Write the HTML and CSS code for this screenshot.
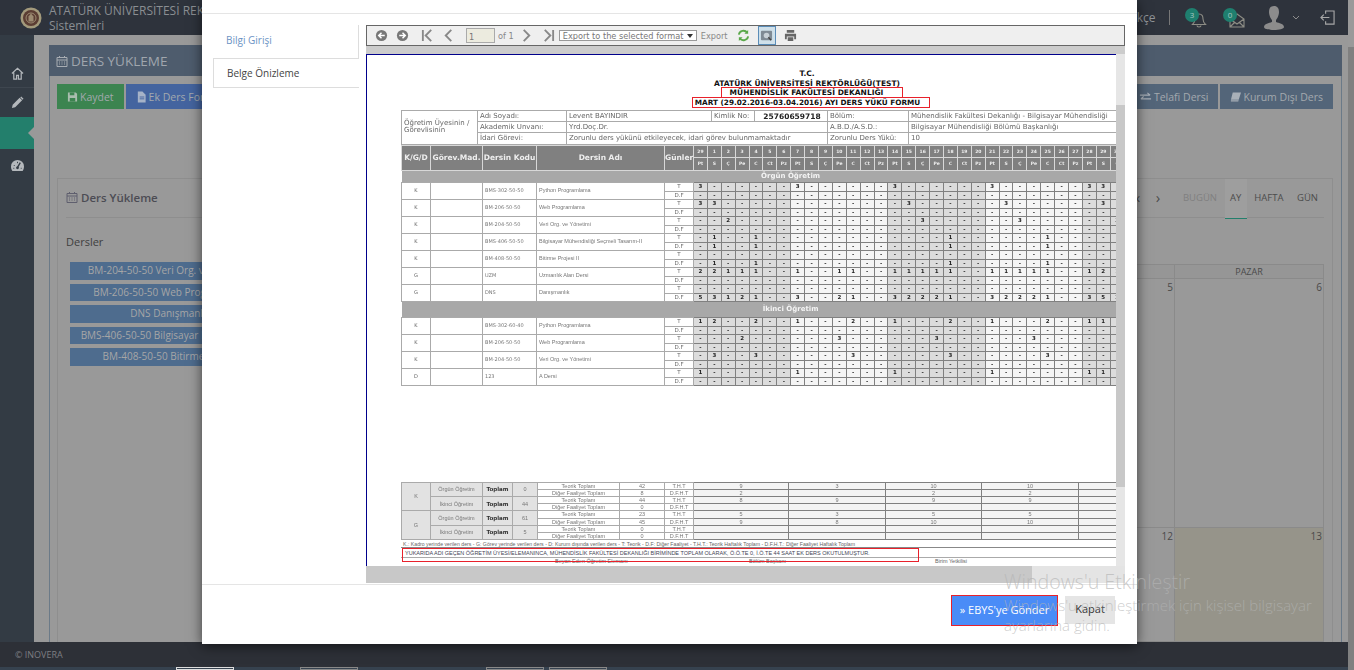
FILE: index.html
```html
<!DOCTYPE html>
<html lang="tr">
<head>
<meta charset="utf-8">
<title>Ders Yükleme</title>
<link rel="stylesheet" href="styles.css">
</head>
<body>
<div class="page">
  <div class="main">
    <header class="topbar">
      <div class="brand">
        <svg class="logo" viewBox="0 0 22 22"><circle cx="11" cy="11" r="10.5" fill="#a39a7c"/><circle cx="11" cy="11" r="8" fill="#5b3d33"/><circle cx="11" cy="11" r="5" fill="none" stroke="#9c8b72" stroke-width="1"/><path d="M11 6.5l2.5 3v5h-5v-5z" fill="#9c8b72"/></svg>
        <div class="brand-text">ATATÜRK ÜNİVERSİTESİ REKTÖRLÜĞÜ<br>Sistemleri</div>
      </div>
      <div class="top-tools">
        <span class="lang">Türkçe</span>
        <span class="vline"></span>
        <span class="notif">
          <svg class="ic-notif" viewBox="0 0 18 18"><path d="M9 3c-3 0-4 2-4 5 0 3-1 4-2.500 5.500h13C14 12 13 11 13 8c0-3-1-5-4-5zM7 14.500c0 2 4 2 4 0" fill="none" stroke="#8d8d85" stroke-width="1.100"/></svg>
          <span class="badge">3</span>
        </span>
        <span class="notif notif-mail">
          <svg class="ic-notif" viewBox="0 0 18 18"><path d="M2 8l7-5 7 5v8H2zM2 8l7 5 7-5M2 16l5-5M16 16l-5-5" fill="none" stroke="#8d8d85" stroke-width="1.100"/></svg>
          <span class="badge">0</span>
        </span>
        <svg class="ic-user" viewBox="0 0 20 24"><path d="M10 0c3.500 0 5 2.500 5 6s-2 7-3 8v2c3 1 8 2 8 5 0 2-5 3-10 3S0 23 0 21c0-3 5-4 8-5v-2c-1-1-3-4.500-3-8s1.500-6 5-6z" fill="#8c8c8c"/></svg>
        <svg class="ic-chev" viewBox="0 0 8 5"><path d="M1 1l3 3 3-3" fill="none" stroke="#8c8c8c"/></svg>
        <svg class="ic-logout" viewBox="0 0 16 16"><path d="M6 4V1h9v14H6v-3M10 8H1M4 5L1 8l3 3" fill="none" stroke="#a8a8a8" stroke-width="1.200"/></svg>
      </div>
    </header>

    <div class="shell">
      <nav class="sidebar">
        <div class="side-item side-home">
          <svg viewBox="0 0 14 14"><path d="M1 7l6-5.500L13 7M3 6v7h3V9h2v4h3V6" fill="none" stroke="#b4b8bc" stroke-width="1.300"/></svg>
        </div>
        <div class="side-item">
          <svg viewBox="0 0 14 14"><path d="M1 13l.8-3.500 7.500-7.500 2.700 2.700-7.500 7.500zM10 1.500l1-1 2.500 2.500-1 1z" fill="#b4b8bc"/></svg>
        </div>
        <div class="side-active"></div>
        <div class="side-item side-gauge">
          <svg viewBox="0 0 14 12"><path d="M7 0a7 7 0 0 1 7 7c0 2-.6 3.500-1.500 5h-11C.6 10.500 0 9 0 7a7 7 0 0 1 7-7z" fill="#b4b8bc"/><path d="M7 8l3-5" stroke="#333b44" stroke-width="1.500"/><circle cx="7" cy="8.500" r="1.500" fill="#333b44"/><path d="M3 6h1M2.500 9h1M10.500 9h1M7 2v1.500" stroke="#333b44"/></svg>
        </div>
      </nav>

      <main class="content">
        <section class="panel">
          <div class="panel-head">
            <svg class="ic-cal" viewBox="0 0 12 12"><path d="M1 2.500h10v9H1zM1 5h10M3.500 1v2M8.500 1v2M3 7h1M5.500 7h1M8 7h1M3 9h1M5.500 9h1M8 9h1" fill="none" stroke="#a8adb3"/></svg>
            DERS YÜKLEME
          </div>
          <div class="panel-body">
            <div class="actions">
              <div class="action-group">
                <span class="btn btn-green"><svg class="btn-ic" viewBox="0 0 12 12"><path d="M1 1h8.500L11 2.500V11H1z" fill="#a9bdae"/><path d="M3 1h5v3H3zM3 7h6v4H3z" fill="#3c8450"/></svg>Kaydet</span>
                <span class="btn btn-blue"><svg class="btn-ic" viewBox="0 0 12 12"><path d="M2 0h5l3.500 3.500V12H2z" fill="#a6b3c8"/><path d="M4 6h5M4 8h5" stroke="#44649f"/></svg>Ek Ders Formu</span>
              </div>
              <div class="action-group">
                <span class="btn btn-slate"><svg class="btn-ic btn-ic-wide" viewBox="0 0 14 12"><path d="M1 4h11M9 1.500L12 4 M13 8H2M5 5.500L2 8" fill="none" stroke="#a9b0b8" stroke-width="1.200"/></svg>Telafi Dersi</span>
                <span class="btn btn-slate"><svg class="btn-ic" viewBox="0 0 12 12"><path d="M3 1h9L9.500 9H1zM1 9.500h8.500L9 11H1z" fill="#a9b0b8"/></svg>Kurum Dışı Ders</span>
              </div>
            </div>

            <div class="card">
              <div class="card-head">
                <div class="card-title">
                  <svg class="ic-cal-sm" viewBox="0 0 12 12"><path d="M1 2.500h10v9H1zM1 5h10M3.500 1v2M8.500 1v2M3 7h1M5.500 7h1M8 7h1M3 9h1M5.500 9h1M8 9h1" fill="none" stroke="#5f5f6e"/></svg>
                  Ders Yükleme
                </div>
                <div class="cal-nav">
                  <span class="cal-arrow">‹</span><span class="cal-arrow">›</span>
                  <span class="cal-tab cal-muted">BUGÜN</span>
                  <span class="cal-tab cal-on">AY</span>
                  <span class="cal-tab">HAFTA</span>
                  <span class="cal-tab">GÜN</span>
                </div>
              </div>
              <div class="card-body">
                <aside class="lessons">
                  <div class="lessons-title">Dersler</div>
                  <div class="lesson">BM-204-50-50 Veri Org. ve Yönetimi</div>
                  <div class="lesson">BM-206-50-50 Web Programlama</div>
                  <div class="lesson">DNS Danışmanlık</div>
                  <div class="lesson">BMS-406-50-50 Bilgisayar Mühendisliği</div>
                  <div class="lesson">BM-408-50-50 Bitirme Projesi</div>
                </aside>
                <div class="calendar">
                  <div class="cal-h">PAZARTESİ</div><div class="cal-h">SALI</div><div class="cal-h">ÇARŞAMBA</div><div class="cal-h">PERŞEMBE</div><div class="cal-h">CUMA</div><div class="cal-h">CUMARTESİ</div><div class="cal-h">PAZAR</div>
                  <div class="cal-d">29</div><div class="cal-d">1</div><div class="cal-d">2</div><div class="cal-d">3</div><div class="cal-d">4</div><div class="cal-d">5</div><div class="cal-d">6</div>
                  <div class="cal-d">7</div><div class="cal-d">8</div><div class="cal-d">9</div><div class="cal-d">10</div><div class="cal-d">11</div><div class="cal-d">12</div><div class="cal-d cal-today">13</div>
                </div>
              </div>
            </div>
          </div>
        </section>
      </main>
    </div>

    <footer class="footer">© INOVERA</footer>
    <div class="strip"><span class="tick tick-w"></span><span class="tick"></span><span class="tick tick-3"></span><span class="tick tick-4"></span></div>
  </div>
  <div class="page-scroll"></div>
</div>

<div class="modal">
  <div class="modal-head"></div>
  <div class="modal-body">
    <ul class="tabs">
      <li class="tab tab-link">Bilgi Girişi</li>
      <li class="tab tab-on">Belge Önizleme</li>
    </ul>
    <div class="viewer">
      <div class="vtoolbar">
        <svg class="vb vb-round" viewBox="0 0 14 14"><circle cx="7" cy="7" r="6" fill="#777"/><path d="M10.500 7h-6M7 4L4 7l3 3" fill="none" stroke="#fff" stroke-width="1.600"/></svg>
        <svg class="vb vb-round" viewBox="0 0 14 14"><circle cx="7" cy="7" r="6" fill="#777"/><path d="M3.500 7h6M7 4l3 3-3 3" fill="none" stroke="#fff" stroke-width="1.600"/></svg>
        <svg class="vb vb-first" viewBox="0 0 14 14"><path d="M2 1v12M11 1L5 7l6 6" fill="none" stroke="#888" stroke-width="2"/></svg>
        <svg class="vb vb-prev" viewBox="0 0 14 14"><path d="M10 1L4 7l6 6" fill="none" stroke="#888" stroke-width="2"/></svg>
        <span class="page-num">1</span>
        <span class="of">of 1</span>
        <svg class="vb vb-next" viewBox="0 0 14 14"><path d="M4 1l6 6-6 6" fill="none" stroke="#888" stroke-width="2"/></svg>
        <svg class="vb vb-last" viewBox="0 0 14 14"><path d="M12 1v12M3 1l6 6-6 6" fill="none" stroke="#888" stroke-width="2"/></svg>
        <span class="vselect">Export to the selected format<i class="caret"></i></span>
        <span class="vexport">Export</span>
        <svg class="vb vb-refresh" viewBox="0 0 14 14"><path d="M2 6a5 5 0 0 1 9-2M12 8a5 5 0 0 1-9 2" fill="none" stroke="#5aa84a" stroke-width="2"/><path d="M12 1v4H8zM2 13V9h4z" fill="#5aa84a"/></svg>
        <span class="vactive"><svg class="vb-in" viewBox="0 0 14 14"><rect x="1" y="2" width="12" height="10" rx="1" fill="#7f8a94"/><circle cx="7" cy="7" r="3" fill="#c8d0d6"/><path d="M9 9l3 3" stroke="#444" stroke-width="1.500"/></svg></span>
        <svg class="vb vb-print" viewBox="0 0 14 14"><path d="M3 1h8v3H3zM1 5h12v6h-2V8H3v3H1zM4 9h6v4H4z" fill="#666"/></svg>
      </div>
      <div class="vgap"></div>
      <div class="vframe">
        <div class="vpage">
          <div class="report">
            <div class="r-title">T.C.</div>
            <div class="r-title">ATATÜRK ÜNİVERSİTESİ REKTÖRLÜĞÜ(TEST)</div>
            <div class="r-title"><span class="red-a">MÜHENDİSLİK FAKÜLTESİ DEKANLIĞI</span></div>
            <div class="r-title r-last"><span class="red-b">MART (29.02.2016-03.04.2016) AYI DERS YÜKÜ FORMU</span></div>

            <table class="info">
              <colgroup><col class="i1"><col class="i2"><col class="i3"><col class="i4"><col class="i5"><col class="i6"><col class="i7"></colgroup>
              <tr><td rowspan="3" class="i-who">Öğretim Üyesinin / Görevlisinin</td><td>Adı Soyadı:</td><td>Levent BAYINDIR</td><td>Kimlik No:</td><td class="i-id">25760659718</td><td>Bölüm:</td><td>Mühendislik Fakültesi Dekanlığı - Bilgisayar Mühendisliği</td></tr>
              <tr><td>Akademik Unvanı:</td><td colspan="3">Yrd.Doç.Dr.</td><td>A.B.D./A.S.D.:</td><td>Bilgisayar Mühendisliği Bölümü Başkanlığı</td></tr>
              <tr><td>İdari Görevi:</td><td colspan="3">Zorunlu ders yükünü etkileyecek, idari görev bulunmamaktadır</td><td>Zorunlu Ders Yükü:</td><td>10</td></tr>
            </table>

            <table class="load" id="load"></table>

            <div class="load-gap"></div>

            <table class="sum">
              <colgroup><col class="s1"><col class="s2"><col class="s3"><col class="s4"><col class="s5"><col class="s6"><col class="s7"><col class="s8"><col class="s8b"><col class="s8c"><col class="s8d"><col class="s9"></colgroup>
              <tr><td rowspan="4" class="s-g">K</td><td rowspan="2" class="s-g">Örgün Öğretim</td><td rowspan="2" class="s-t">Toplam</td><td rowspan="2" class="s-g">0</td><td>Teorik Toplam</td><td>42</td><td>T.H.T</td><td class="s-w">9</td><td class="s-w">3</td><td class="s-w">10</td><td class="s-w">10</td><td class="s-w"></td></tr>
              <tr><td>Diğer Faaliyet Toplam</td><td>8</td><td>D.F.H.T</td><td class="s-w">2</td><td class="s-w"></td><td class="s-w">2</td><td class="s-w">2</td><td class="s-w"></td></tr>
              <tr><td rowspan="2" class="s-g">İkinci Öğretim</td><td rowspan="2" class="s-t">Toplam</td><td rowspan="2" class="s-g">44</td><td>Teorik Toplam</td><td>44</td><td>T.H.T</td><td class="s-w">8</td><td class="s-w">9</td><td class="s-w">9</td><td class="s-w">9</td><td class="s-w"></td></tr>
              <tr><td>Diğer Faaliyet Toplam</td><td>0</td><td>D.F.H.T</td><td class="s-w"></td><td class="s-w"></td><td class="s-w"></td><td class="s-w"></td><td class="s-w"></td></tr>
              <tr><td rowspan="4" class="s-g">G</td><td rowspan="2" class="s-g">Örgün Öğretim</td><td rowspan="2" class="s-t">Toplam</td><td rowspan="2" class="s-g">61</td><td>Teorik Toplam</td><td>23</td><td>T.H.T</td><td class="s-w">5</td><td class="s-w">3</td><td class="s-w">5</td><td class="s-w">5</td><td class="s-w"></td></tr>
              <tr><td>Diğer Faaliyet Toplam</td><td>45</td><td>D.F.H.T</td><td class="s-w">9</td><td class="s-w">8</td><td class="s-w">10</td><td class="s-w">10</td><td class="s-w"></td></tr>
              <tr><td rowspan="2" class="s-g">İkinci Öğretim</td><td rowspan="2" class="s-t">Toplam</td><td rowspan="2" class="s-g">5</td><td>Teorik Toplam</td><td>0</td><td>T.H.T</td><td class="s-w"></td><td class="s-w"></td><td class="s-w"></td><td class="s-w"></td><td class="s-w"></td></tr>
              <tr><td>Diğer Faaliyet Toplam</td><td>0</td><td>D.F.H.T</td><td class="s-w"></td><td class="s-w"></td><td class="s-w"></td><td class="s-w"></td><td class="s-w"></td></tr>
            </table>

            <div class="legend">K.: Kadro yerinde verilen ders - G: Görev yerinde verilen ders - D: Kurum dışında verilen ders - T: Teorik - D.F: Diğer Faaliyet - T.H.T.: Teorik Haftalık Toplam - D.F.H.T.: Diğer Faaliyet Haftalık Toplam</div>
            <div class="statement"><span class="red-c">YUKARIDA ADI GEÇEN ÖĞRETİM ÜYESİ/ELEMANINCA, MÜHENDİSLİK FAKÜLTESİ DEKANLIĞI BİRİMİNDE TOPLAM OLARAK, Ö.Ö.TE 0, İ.Ö.TE 44 SAAT EK DERS OKUTULMUŞTUR.</span></div>
            <div class="signs"><span class="sign-1">Beyan Eden Öğretim Elemanı</span><span class="sign-2">Bölüm Başkanı</span><span class="sign-3">Birim Yetkilisi</span></div>
          </div>
        </div>
        <div class="vscroll"><div class="vscroll-gap"></div><div class="vscroll-thumb"></div></div>
      </div>
      <div class="hscroll"><div class="hscroll-thumb"></div></div>
    </div>
  </div>
  <div class="modal-foot">
    <span class="btn-send">» EBYS'ye Gönder</span>
    <span class="btn-close">Kapat</span>
  </div>
</div>

<div class="watermark">
  <div class="wm-title">Windows'u Etkinleştir</div>
  <div class="wm-text">Windows'u etkinleştirmek için kişisel bilgisayar<br>ayarlarına gidin.</div>
</div>

<script src="app.js"></script>
</body>
</html>
```

FILE: styles.css
```css
* { box-sizing: border-box; }
html, body { margin: 0; padding: 0; height: 670px; overflow: hidden; }
body { font-family: "Open Sans", "Noto Sans", sans-serif; background: #999; position: relative; }

.page { display: flex; width: 1354px; height: 670px; }
.main { width: 1348px; display: flex; flex-direction: column; height: 670px; }
.page-scroll { width: 6px; background: linear-gradient(#9a9a9a 0, #9a9a9a 47px, #808080 47px); }

/* top bar */
.topbar { height: 35px; background: #2e333c; display: flex; justify-content: space-between; align-items: center; padding: 0 13.500px 0 20px; }
.brand { display: flex; align-items: center; gap: 7px; }
.logo { width: 22px; height: 22px; }
.brand-text { font-size: 12px; line-height: 15px; color: #8a8e92; }
.top-tools { display: flex; align-items: center; }
.lang { font-size: 12px; color: #8f9296; margin-right: 13px; }
.vline { width: 1px; height: 15px; background: #777; margin-right: 17px; }
.notif { position: relative; width: 18px; height: 18px; margin-right: 20px; }
.notif-mail { margin-right: 21px; }
.ic-notif { width: 18px; height: 18px; display: block; position: relative; left: 3px; top: 2px; }
.badge { position: absolute; left: -1.500px; top: -1px; width: 14px; height: 14px; border-radius: 50%; background: #1f7f6f; color: #a8c8c2; font-size: 8px; line-height: 14px; text-align: center; }
.ic-user { width: 20px; height: 24px; margin-right: 8px; }
.ic-chev { width: 8px; height: 5px; margin-right: 20px; }
.ic-logout { width: 15px; height: 15px; }

/* shell */
.shell { flex: 1; display: flex; min-height: 0; }
.sidebar { width: 34px; background: #333b44; padding-top: 24px; display: flex; flex-direction: column; flex: none; }
.side-item { height: 29px; display: flex; align-items: center; justify-content: center; }
.side-item svg { width: 13px; height: 13px; }
.side-home { border-bottom: 1px solid #3e464f; }
.side-active { height: 32px; background: #237f6c; position: relative; }
.side-active::after { content: ""; position: absolute; right: 0; top: 10px; border: 6px solid transparent; border-left: 0; border-right-color: #999; }
.side-gauge { height: 32px; }

.content { flex: 1; padding: 10px 6px 0 15px; background: #999; min-width: 0; }
.panel { height: 100%; border-left: 1px solid #6b7a88; border-right: 1px solid #6b7a88; display: flex; flex-direction: column; }
.panel-head { height: 31px; background: #4e5c6d; margin: 0 -1px; color: #a0a6ad; font-size: 13.500px; display: flex; align-items: center; padding-left: 7px; gap: 2px; }
.ic-cal { width: 12px; height: 12px; margin-right: 1px; }
.panel-body { flex: 1; padding: 8px 8px 0 7px; display: flex; flex-direction: column; min-height: 0; }
.actions { display: flex; justify-content: space-between; height: 25px; margin-bottom: 69px; flex: none; }
.action-group { display: flex; gap: 2px; }
.btn { display: flex; align-items: center; height: 25px; padding: 0 10px; font-size: 10.500px; color: #a3a9ae; }
.btn-ic { width: 11px; height: 12px; margin-right: 2px; }
.btn-ic-wide { width: 13px; }
.btn-green { background: #3c8450; }
.btn-blue { background: #44649f; padding-right: 40px; }
.btn-slate { background: #536579; }
.card { flex: 1; border: 1px solid #8e8e8e; border-bottom: 0; padding: 0 8px; display: flex; flex-direction: column; min-height: 0; }
.card-head { height: 39px; border-bottom: 1px solid #8e8e8e; display: flex; justify-content: space-between; align-items: center; flex: none; }
.card-title { font-size: 11.500px; font-weight: 600; color: #4c4c54; display: flex; align-items: center; gap: 3px; position: relative; top: -1px; }
.ic-cal-sm { width: 12px; height: 12px; }
.cal-nav { display: flex; align-items: stretch; height: 39px; font-size: 9.500px; color: #4c4c4c; }
.cal-arrow { width: 20px; font-size: 15px; line-height: 37px; text-align: center; }
.cal-tab { line-height: 38px; padding: 0 6px; margin-left: 1.500px; }
.cal-arrow + .cal-tab { margin-left: 9px; }
.cal-muted { color: #808080; }
.cal-on { padding: 0 5.500px; border-bottom: 1px solid #237f6c; background: #9e9e9e; margin-bottom: -1px; }
.card-body { flex: 1; display: flex; min-height: 0; }
.lessons { width: 214px; padding: 16px 0 0 0; flex: none; }
.lessons-title { font-size: 11px; color: #3f3f3f; margin-bottom: 13px; line-height: 15px; }
.lesson { margin: 0 9px 4px 4px; height: 17.500px; line-height: 17px; background: #4e6c8e; color: #a6a6a6; font-size: 10px; text-align: center; white-space: nowrap; overflow: hidden; }
.calendar { flex: 1; display: grid; grid-template-columns: repeat(7, 1fr); grid-template-rows: 15px 249px 1fr; margin-top: 46px; border-left: 1px solid #8a8a8a; }
.cal-h { border: solid #8a8a8a; border-width: 1px 1px 1px 0; background: #969696; font-size: 9px; line-height: 14px; text-align: center; color: #4a4a4a; }
.cal-d { border: solid #8a8a8a; border-width: 0 1px 1px 0; font-size: 10px; color: #4a4a4a; text-align: right; padding: 1px 1px 0 0; }
.cal-today { background: #96948a; }

.footer { height: 25px; background: #2d3037; color: #7d7e82; font-size: 9px; line-height: 26px; padding-left: 15px; flex: none; }
.strip { height: 3px; background: #36424f; display: flex; padding-left: 176px; flex: none; overflow: hidden; }
.tick { width: 58px; height: 3px; border: 1px solid #888; margin-right: 66px; }
.tick-w { border-color: #ddd; }
.tick-3 { margin-left: 62px; margin-right: 5px; }
.tick-4 { margin: 0; }

/* modal */
.modal { position: absolute; left: 202px; top: 0; width: 935px; height: 644px; background: #fff; box-shadow: 0 2px 12px rgba(0,0,0,.6); display: flex; flex-direction: column; }
.modal-head { height: 14px; border-bottom: 1px solid #e5e5e5; flex: none; }
.modal-body { height: 571px; border-bottom: 1px solid #e5e5e5; display: flex; padding: 11px 12px 0 11px; flex: none; }
.tabs { list-style: none; margin: 0; padding: 0; width: 146px; height: 63px; flex: none; font-size: 10px; }
.tab { height: 33px; line-height: 31px; padding-left: 13px; }
.tab-link { color: #6b93c4; border-right: 1px solid #ddd; }
.tab-on { height: 30px; line-height: 29px; color: #444; border: 1px solid #ddd; border-right: 0; }
.viewer { margin-left: 7px; width: 759px; flex: none; display: flex; flex-direction: column; height: 558px; }
.vtoolbar { height: 21px; background: #efefef; border: 1px solid #666; display: flex; align-items: center; flex: none; padding-left: 8px; font-family: "DejaVu Sans", sans-serif; font-size: 8.200px; color: #888; }
.vb { width: 13px; height: 13px; flex: none; }
.vb-round { margin-right: 8px; }
.vb-first { margin-left: 4px; margin-right: 8px; }
.vb-prev { margin-right: 11px; }
.page-num { width: 29px; height: 15px; border: 1px solid #aaa; background: #ecebdf; padding-left: 2px; line-height: 16px; color: #777; margin-right: 3px; }
.of { margin-right: 6px; }
.vb-next { margin-right: 9px; }
.vb-last { margin-right: 4px; }
.vselect { width: 138px; height: 11px; border: 1px solid #999; background: #fff; color: #777; line-height: 10px; padding-left: 3px; white-space: nowrap; position: relative; margin-right: 4px; overflow: hidden; }
.caret { position: absolute; right: 3px; top: 3px; border: 3px solid transparent; border-top: 4px solid #333; border-bottom: 0; }
.vexport { margin-right: 9px; }
.vb-refresh { margin-right: 8px; }
.vactive { width: 18px; height: 19px; border: 1px solid #5b8db8; background: #cfe0ea; display: flex; align-items: center; justify-content: center; margin-right: 8px; }
.vb-in { width: 13px; height: 13px; }
.vgap { height: 8px; background: #ccc; flex: none; }
.vframe { height: 512px; display: flex; flex: none; }
.vpage { width: 750px; border: solid #00008b; border-width: 1px 0 0 1px; overflow: hidden; background: #fff; flex: none; }
.vscroll { width: 9px; background: #e6e6e6; display: flex; flex-direction: column; }
.vscroll-gap { height: 51px; background: #e6e6e6; }
.vscroll-thumb { height: 382px; background: #c8c8c8; }
.hscroll { height: 17px; background: #e4e4e4; flex: none; }
.hscroll-thumb { width: 666px; height: 17px; background: #c8c8c8; }

/* report */
.report { width: 812px; margin-left: 34px; padding-top: 14px; font-family: "DejaVu Sans", sans-serif; color: #555; }
.r-title { text-align: center; font-size: 7.500px; font-weight: 700; color: #111; height: 10px; line-height: 9px; }
.r-last { height: 11px; }
.red-a, .red-b { display: inline-block; outline: 1px solid #e8212b; line-height: 9px; position: relative; top: -1px; }
.red-a { padding-left: 8px; padding-right: 19px; left: 5px; }
.red-b { padding-left: 2px; padding-right: 9px; left: 4px; font-size: 7.300px; }
.info { border-collapse: collapse; table-layout: fixed; width: 778px; font-size: 7px; color: #666; filter: blur(.25px); }
.info td { border: 1px solid #aaa; height: 11.200px; padding: 0 0 0 2px; white-space: nowrap; overflow: hidden; line-height: 9px; }
.info td.i-who { white-space: normal; line-height: 7.500px; padding-right: 2px; }
.info td.i-id { font-weight: 700; font-size: 7.500px; color: #222; text-align: center; }
.i1 { width: 76px; } .i2 { width: 89px; } .i3 { width: 145px; } .i4 { width: 43px; } .i5 { width: 73px; } .i6 { width: 81px; } .i7 { width: 271px; }

.load { border-collapse: collapse; table-layout: fixed; width: 778px; margin-top: 0; color: #666; filter: blur(.25px); }
.load td, .load th { padding: 0; overflow: hidden; white-space: nowrap; }
.c-kgd { width: 29px; } .c-mad { width: 52px; } .c-code { width: 54px; } .c-name { width: 128px; } .c-gun { width: 29px; } .c-day { width: 13.900px; }
.load th { background: #808080; color: #eee; border: 1px solid #d8d8d8; font-size: 7.500px; font-weight: 700; height: 12.500px; }
.load th.h-day { font-size: 4.500px; }
.sec td { background: #a8a8a8; color: #f4f4f4; font-size: 7px; font-weight: 700; text-align: center; border: 0; }
.sec1 td { height: 12px; }
.sec2 td { height: 16px; }
.rT td, .rF td { font-size: 5px; text-align: center; border: 1px solid #aaa; line-height: 7px; }
.rT td { height: 9px; }
.rF td { height: 8px; }
.load td.tx { text-align: left; padding-left: 2px; }
.load td.n { font-family: "Liberation Sans", sans-serif; font-size: 5.500px; color: #777; }
.load td.code { color: #777; }
.load td.gn { font-size: 5.500px; color: #666; }
.load td.d { background: #f5f5f5; border-color: #808080; color: #222; font-weight: 700; font-size: 5.500px; }
.load td.d.g { background: #dcdcdc; }

.load-gap { height: 96px; }
.sum { border-collapse: collapse; table-layout: fixed; width: 778px; font-family: "Liberation Sans", sans-serif; font-size: 5.500px; color: #777; text-align: center; filter: blur(.25px); }
.sum td { border: 1px solid #aaa; height: 7.200px; padding: 0; line-height: 6px; overflow: hidden; white-space: nowrap; }
.s1 { width: 29px; } .s2 { width: 52px; } .s3 { width: 30px; } .s4 { width: 25px; } .s5 { width: 82px; } .s6 { width: 45px; } .s7 { width: 29px; } .s8 { width: 95px; } .s8b { width: 97px; } .s8c { width: 96px; } .s8d { width: 97px; } .s9 { width: 101px; }
.sum td.s-g { background: #e2e2e2; }
.sum td.s-t { background: #e2e2e2; font-family: "DejaVu Sans", sans-serif; font-weight: 700; font-size: 5.500px; color: #333; }
.sum td.s-w { background: #f4f4f4; border-color: #808080; }
.legend { height: 8px; font-family: "Liberation Sans", sans-serif; font-size: 5.200px; line-height: 8px; color: #666; padding-left: 2px; white-space: nowrap; border-bottom: 1px solid #888; }
.statement { height: 10px; border-bottom: 1px solid #aaa; font-family: "Liberation Sans", sans-serif; font-size: 5.500px; line-height: 9px; color: #445; white-space: nowrap; }
.red-c { display: block; width: 517px; height: 14px; margin-left: 1px; border: 1px solid #e8212b; padding-left: 2px; line-height: 9px; position: relative; }
.signs { font-family: "Liberation Sans", sans-serif; font-size: 5.500px; color: #666; line-height: 7px; display: flex; white-space: nowrap; }
.sign-1 { margin-left: 154px; width: 194px; }
.sign-2 { width: 186px; }

.modal-foot { flex: 1; display: flex; align-items: flex-start; justify-content: flex-end; padding: 10px 22px 0 0; gap: 7px; }
.btn-send { width: 107px; height: 31px; background: #4a8cf7; border: 1px solid #e8212b; color: #fff; font-size: 11px; line-height: 27px; text-align: center; white-space: nowrap; }
.btn-close { width: 50px; height: 28px; background: #e5e5e5; color: #333; font-size: 11px; line-height: 25px; text-align: center; margin-top: 1px; }

.watermark { position: absolute; left: 1004px; top: 569px; color: rgba(180,180,180,.68); font-weight: 300; white-space: nowrap; pointer-events: none; }
.wm-title { font-size: 19.600px; line-height: 26px; }
.wm-text { font-size: 15px; line-height: 20px; margin-top: 0; }
```

FILE: app.js
```js
var days = [29];
var i;
for (i = 1; i <= 31; i++) days.push(i);
days.push(1, 2, 3);
days = days.slice(0, 35);
var names = ['Pt', 'S', 'Ç', 'Pe', 'C', 'Ct', 'Pz'];
var N = 35;

function weekGrey(idx) { return Math.floor(idx / 7) % 2 === 0; }

function dayCells(map) {
  var s = '';
  for (var k = 0; k < N; k++) {
    var v = map && map[k] !== undefined ? map[k] : '-';
    s += '<td class="d' + (weekGrey(k) ? ' g' : '') + '">' + v + '</td>';
  }
  return s;
}

function course(r) {
  return '<tr class="rT"><td rowspan="2">' + r[0] + '</td><td rowspan="2"></td>' +
    '<td rowspan="2" class="tx code">' + r[1] + '</td><td rowspan="2" class="tx n">' + r[2] + '</td>' +
    '<td class="gn">T</td>' + dayCells(r[3]) + '</tr>' +
    '<tr class="rF"><td class="gn">D.F</td>' + dayCells(r[4]) + '</tr>';
}

var orgun = [
  ['K', 'BMS-302-50-50', 'Python Programlama', {0:3,7:3,14:3,21:3,28:3,29:3}, {}],
  ['K', 'BM-206-50-50', 'Web Programlama', {0:3,1:3,15:3,22:3,29:3}, {}],
  ['K', 'BM-204-50-50', 'Veri Org. ve Yönetimi', {2:2,16:3,23:3,30:3}, {}],
  ['K', 'BMS-406-50-50', 'Bilgisayar Mühendisliği Seçmeli Tasarım-II', {1:1,4:1,18:1,25:1}, {1:1,4:1,18:1,25:1}],
  ['K', 'BM-408-50-50', 'Bitirme Projesi II', {}, {1:1,4:1,18:1,25:1}],
  ['G', 'UZM', 'Uzmanlık Alan Dersi', {0:2,1:2,2:1,3:1,4:1,7:1,10:1,11:1,14:1,15:1,16:1,17:1,18:1,21:1,22:1,23:1,24:1,25:1,28:1,29:2,30:1}, {}],
  ['G', 'DNS', 'Danışmanlık', {}, {0:5,1:3,2:1,3:2,4:1,7:3,10:2,11:1,14:3,15:2,16:2,17:2,18:1,21:3,22:2,23:2,24:2,25:1,28:3,29:5,30:2}]
];
var ikinci = [
  ['K', 'BMS-302-60-40', 'Python Programlama', {0:1,1:2,4:2,7:1,11:2,14:1,18:2,21:1,25:2,28:1,29:1}, {}],
  ['K', 'BM-206-50-50', 'Web Programlama', {3:2,10:3,17:3,24:3}, {}],
  ['K', 'BM-204-50-50', 'Veri Org. ve Yönetimi', {1:3,4:3,11:3,18:3,25:3}, {}],
  ['D', '123', 'A Dersi', {0:1,7:1,14:1,21:1,28:1,29:1}, {}]
];

var html = '<colgroup><col class="c-kgd"><col class="c-mad"><col class="c-code"><col class="c-name"><col class="c-gun">';
for (i = 0; i < N; i++) html += '<col class="c-day">';
html += '</colgroup>';

html += '<tr><th rowspan="2">K/G/D</th><th rowspan="2">Görev.Mad.</th><th rowspan="2">Dersin Kodu</th><th rowspan="2">Dersin Adı</th><th rowspan="2">Günler</th>';
for (i = 0; i < N; i++) html += '<th class="h-day">' + days[i] + '</th>';
html += '</tr><tr>';
for (i = 0; i < N; i++) html += '<th class="h-day">' + names[i % 7] + '</th>';
html += '</tr>';

html += '<tr class="sec sec1"><td colspan="' + (N + 5) + '">Örgün Öğretim</td></tr>';
orgun.forEach(function (r) { html += course(r); });
html += '<tr class="sec sec2"><td colspan="' + (N + 5) + '">İkinci Öğretim</td></tr>';
ikinci.forEach(function (r) { html += course(r); });

document.getElementById('load').innerHTML = html;
```
